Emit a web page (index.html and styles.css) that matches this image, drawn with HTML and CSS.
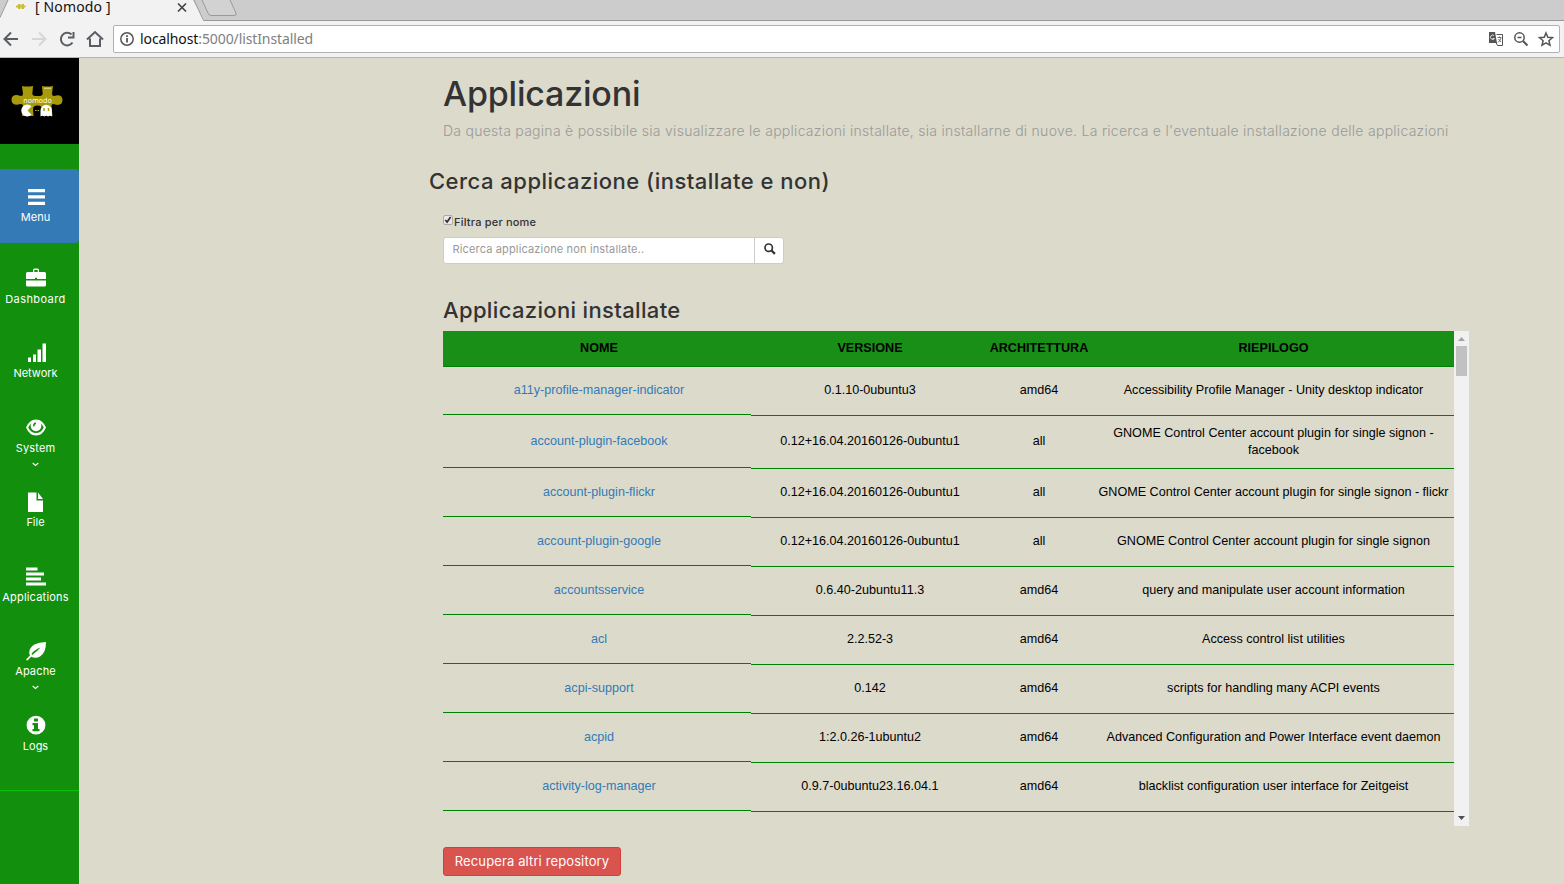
FILE: index.html
```html
<!DOCTYPE html>
<html lang="it">
<head>
<meta charset="utf-8">
<title>[ Nomodo ]</title>
<link rel="stylesheet" href="styles.css">
</head>
<body>
<header class="browser">
  <div class="tabs">
    <svg class="tab-shapes" width="260" height="21" viewBox="0 0 260 21">
      <path d="M0 21V17L8 0H193L204 20V21Z" fill="#f2f2f2"/>
      <path d="M0 17.500L8 0M194 0L203.500 20.500H260" fill="none" stroke="#999"/>
      <path d="M202 0L208 13Q209 15.500 211 15.500H234Q237 15.500 236 13L230 0" fill="#d2d2d2" stroke="#999"/>
      <path d="M16 5.500h2V4h2.500v1.500h1V4H24v1.500h1.500v2H24V9h-2.500V7.500h-1V9H18V7.500h-2z" fill="#c9bd3c"/>
      <path d="M178 3.500l8 8M186 3.500l-8 8" stroke="#444" stroke-width="1.700"/>
    </svg>
    <span class="tab-title">[ Nomodo ]</span>
  </div>
  <div class="toolbar">
    <svg class="nav-icons" width="113" height="36" viewBox="0 21 113 36" fill="none" stroke="#5a5d62" stroke-width="2">
      <path d="M18 39H5M11 32.500L4.500 39l6.500 6.500"/>
      <path d="M32 39h13M39 32.500l6.500 6.500-6.500 6.500" stroke="#d6d6d6"/>
      <path d="M72.500 42.500A6.300 6.300 0 1 1 71.500 34.500M73.500 32v5.500H68"/>
      <path d="M87 39.500L95 32l8 7.500M90 38.500v7.500h10v-7.500"/>
    </svg>
    <div class="address">
      <svg width="16" height="16" viewBox="0 0 16 16" fill="none" stroke="#555" stroke-width="1.500"><circle cx="8" cy="8" r="6.200"/><path d="M8 7v4.500M8 4.300v1.700" stroke-width="1.800"/></svg>
      <span class="url"><b>localhost</b>:5000/listInstalled</span>
      <svg class="address-icons" width="70" height="20" viewBox="1486 29 70 20" fill="none" stroke="#555" stroke-width="1.500">
        <path d="M1489 32h6l2 11h-8z" fill="#555" stroke="none"/><path d="M1496.500 34.500h6v11h-5l-1.500-3" stroke-width="1"/><path d="M1494 35.500a2.200 2.200 0 1 0 .5 3h-2" stroke="#ddd" stroke-width="1"/><path d="M1497.500 37.500h4M1499.500 36.500v1M1501 38q-1 3-3 4.500M1498.500 39l2.500 3" stroke-width=".8"/>
        <circle cx="1519.500" cy="37.500" r="4.700"/><path d="M1523 41l4.500 4.500" stroke-width="2"/><path d="M1517.500 37.500h4"/>
        <path d="M1546 33l1.800 4.300 4.700.4-3.600 3.100 1.100 4.500-4-2.400-4 2.400 1.100-4.500-3.600-3.100 4.700-.4z"/>
      </svg>
    </div>
  </div>
</header>
<div class="page">
  <nav class="sidebar">
    <div class="brand">
      <svg width="52" height="34" viewBox="0 0 52 34">
        <path d="M11 1q5.500 1 11 0l-.5 6q-1 4 3 4h4q4 0 3-4L31 1q5.500 1 11 0l-1 7.500q0 2.500 2 2.500l3.500-.8q5 0 5 4.800t-5 5L42 19q-1.500 0-1.500 2l1 10H30l1-7q0-3.500-4.500-3.500T22 24l.5 7H11l1-10q0-2-2-2l-4 .8q-5.500 0-5.500-5T6 10l4 1q2 0 2-2.500z" fill="#a89a08"/>
        <path d="M20.500 21.300a6 6 0 1 0 0 8.500L16.500 25.500z" fill="#fff"/>
        <path d="M29.500 31.500V25.500a5.700 5.700 0 0 1 11.400 0V31.500l-2-1-1.800 1-1.900-1-1.900 1-1.900-1z" fill="#fff"/>
        <path d="M33 23v3M37.500 23v3" stroke="#a89a08" stroke-width="1.500"/>
        <path d="M24 25.500h4" stroke="#b8a920" stroke-width="1.200" stroke-dasharray="1.500 1"/>
        <path d="M33 3.200h7" stroke="#ede7b5" stroke-width=".9"/>
        <text x="26.500" y="17.500" text-anchor="middle" class="brand-text">nomodo</text>
      </svg>
    </div>
    <a class="item active">
      <svg width="20" height="20" viewBox="0 0 20 20"><path d="M2 3h17v3.200H2zM2 9.300h17v3.200H2zM2 15.700h17v3.200H2z"/></svg><span class="label l-menu">Menu</span></a>
    <a class="item">
      <svg width="20" height="20" viewBox="0 0 20 20"><path d="M7 4V2Q7 .5 8.500 .5h3Q13 .5 13 2v2h5.500Q20 4 20 5.500v5.500h-9v-1.300H9v1.300H0v-5.500Q0 4 1.500 4zM8.300 4h3.400V2H8.300zM0 12.500h20v4.500Q20 18.500 18.500 18.500h-17Q0 18.500 0 17z" fill-rule="evenodd"/></svg><span class="label l-wide">Dashboard</span></a>
    <a class="item">
      <svg width="20" height="20" viewBox="0 0 20 20"><path d="M2 16h3v5H2zM7 13h3v8H7zM11.500 8h3.500v13h-3.500zM16.500 2H20v19h-3.500z" transform="translate(0 -.5)"/></svg><span class="label">Network</span></a>
    <a class="item">
      <svg width="20" height="20" viewBox="0 0 20 20"><path d="M0 10.500Q3.500 2.500 10 2.500t10 8Q16.500 18.500 10 18.500T0 10.500zm2.200 0Q5 16 10 16t7.800-5.500Q16.500 8 14.800 6.700a5.300 5.300 0 1 1-9.600 0Q3.500 8 2.200 10.500zM9.500 5.200q-2.600.8-2.500 4l1.200.2q.3-2.200 2-2.500z" fill-rule="evenodd"/></svg><span class="label l-sys">System</span>
      <svg class="caret" width="7" height="5" viewBox="0 0 7 5"><path d="M.7 1l2.800 2.500L6.300 1"/></svg></a>
    <a class="item">
      <svg class="down" width="20" height="20" viewBox="0 0 20 20"><path d="M2 .5h8.500v8H17V20H2zM12 .5L17 7h-5z"/></svg><span class="label">File</span></a>
    <a class="item">
      <svg width="20" height="20" viewBox="0 0 20 20"><path d="M0 1.500h11.500v3H0zM0 6.500h18v3H0zM0 11.500h15v3H0zM0 16.500h20v3H0z"/></svg><span class="label l-apps">Applications</span></a>
    <a class="item">
      <svg class="down" width="20" height="20" viewBox="0 0 20 20"><path d="M20 1Q6 2 4 8 2.500 12 4 14.500L0 18.500q1 1.500 2 .5l3.200-3.200Q10 18 14 15.500 20 12 20 1zM5.500 13Q8 9 14.500 6.500 11.500 10 6.200 14z" fill-rule="evenodd"/></svg><span class="label l-sys">Apache</span>
      <svg class="caret" width="7" height="5" viewBox="0 0 7 5"><path d="M.7 1l2.800 2.500L6.300 1"/></svg></a>
    <a class="item">
      <svg width="20" height="20" viewBox="0 0 20 20"><path d="M10 .8a9.400 9.400 0 1 0 0 18.800a9.400 9.400 0 1 0 0-18.800zM8 3.500h4v3H8zM6.500 8H12v6h1.500v2.200h-7V14H8v-3.800H6.500z" fill-rule="evenodd"/></svg><span class="label">Logs</span></a>
    <div class="rule"></div>
  </nav>
  <main class="content">
    <h1>Applicazioni</h1>
    <p class="lead">Da questa pagina è possibile sia visualizzare le applicazioni installate, sia installarne di nuove. La ricerca e l'eventuale installazione delle applicazioni</p>
    <h2 class="search-title">Cerca applicazione (installate e non)</h2>
    <div class="filter">
      <svg width="10" height="10" viewBox="0 0 10 10"><rect x=".5" y=".5" width="9" height="9" rx="1.500" fill="#e8e8e8" stroke="#aaa"/><path d="M2.300 5l1.800 2 3.500-5" fill="none" stroke="#333" stroke-width="1.800"/></svg>
      <span>Filtra per nome</span>
    </div>
    <div class="search">
      <div class="field">Ricerca applicazione non installate..</div>
      <div class="search-btn"><svg width="12" height="12" viewBox="0 0 12 12"><circle cx="4.700" cy="4.700" r="3.700" fill="none" stroke="#333" stroke-width="1.700"/><path d="M7.500 7.500l3.400 3.400" stroke="#333" stroke-width="2.200"/></svg></div>
    </div>
    <h2 class="list-title">Applicazioni installate</h2>
    <div class="list">
      <div class="table">
        <div class="row head"><div>NOME</div><div>VERSIONE</div><div>ARCHITETTURA</div><div>RIEPILOGO</div></div>
        <div class="row"><div class="name">a11y-profile-manager-indicator</div><div>0.1.10-0ubuntu3</div><div>amd64</div><div>Accessibility Profile Manager - Unity desktop indicator</div></div>
        <div class="row tall"><div class="name">account-plugin-facebook</div><div>0.12+16.04.20160126-0ubuntu1</div><div>all</div><div>GNOME Control Center account plugin for single signon -<br>facebook</div></div>
        <div class="row"><div class="name">account-plugin-flickr</div><div>0.12+16.04.20160126-0ubuntu1</div><div>all</div><div>GNOME Control Center account plugin for single signon - flickr</div></div>
        <div class="row"><div class="name">account-plugin-google</div><div>0.12+16.04.20160126-0ubuntu1</div><div>all</div><div>GNOME Control Center account plugin for single signon</div></div>
        <div class="row"><div class="name">accountsservice</div><div>0.6.40-2ubuntu11.3</div><div>amd64</div><div>query and manipulate user account information</div></div>
        <div class="row"><div class="name">acl</div><div>2.2.52-3</div><div>amd64</div><div>Access control list utilities</div></div>
        <div class="row"><div class="name">acpi-support</div><div>0.142</div><div>amd64</div><div>scripts for handling many ACPI events</div></div>
        <div class="row"><div class="name">acpid</div><div>1:2.0.26-1ubuntu2</div><div>amd64</div><div>Advanced Configuration and Power Interface event daemon</div></div>
        <div class="row"><div class="name">activity-log-manager</div><div>0.9.7-0ubuntu23.16.04.1</div><div>amd64</div><div>blacklist configuration user interface for Zeitgeist</div></div>
      </div>
      <div class="scrollbar">
        <svg width="15" height="15" viewBox="0 0 15 15"><path d="M4 10h7L7.500 6z" fill="#a3a3a3"/></svg>
        <div class="thumb"></div>
        <svg width="15" height="15" viewBox="0 0 15 15"><path d="M4 5h7L7.500 9z" fill="#505050"/></svg>
      </div>
    </div>
    <div class="danger-btn">Recupera altri repository</div>
  </main>
</div>
</body>
</html>
```
FILE: styles.css
```css
* { box-sizing: border-box; }
body { margin: 0; height: 884px; overflow: hidden; background: #dcdacb; font-family: Inter, "Open Sans", sans-serif; color: #333; }
svg { display: block; flex: none; }
.browser { height: 58px; background: #f2f2f2; border-bottom: 1px solid #b3b6b3; }
.tabs { position: relative; height: 21px; background: #ccc; border-bottom: 1px solid #999; }
.tab-title { position: absolute; left: 35px; top: -3px; font: 14px/20px "Noto Sans", sans-serif; color: #111; letter-spacing: .15px; white-space: nowrap; }
.toolbar { display: flex; height: 36px; padding-right: 4px; align-items: center; }
.address { display: flex; flex: 1; height: 28px; align-items: center; padding: 0 5px; background: #fff; border: 1px solid #b0b0b0; border-radius: 2px; }
.url { flex: 1; margin-left: 5px; font: 14px/20px "Noto Sans", sans-serif; color: #808080; letter-spacing: -.1px; white-space: nowrap; }
.url b { font-weight: 400; color: #111; }
.address-icons { margin-right: -2px; }
.page { display: flex; height: 826px; }
.sidebar { width: 79px; background: #138f0e; }
.brand { height: 86px; margin-bottom: 25px; padding: 27px 0 0 11px; background: #000; }
.brand-text { font: 7px "DejaVu Sans", sans-serif; fill: #fff; }
.item { display: flex; flex-direction: column; align-items: center; height: 74.600px; padding: 18px 8px 0 0; color: #fff; font-size: 11px; line-height: 16px; white-space: nowrap; }
.item.active { height: 74px; margin-bottom: 6.500px; background: #337ab7; border-radius: 0 4px 4px 0; padding-top: 17px; }
.item svg { fill: #fff; }
.item .down { margin: 1px 0 -1px; }
.label { margin-top: 3px; }
.l-wide { letter-spacing: .42px; }
.l-sys { letter-spacing: .15px; }
.l-apps { letter-spacing: .2px; }
.item .caret { margin-top: 6px; fill: none; stroke: #fff; stroke-width: 1.100; }
.rule { margin-top: 18px; height: 1px; background: #0cc10c; }
.content { width: 1026px; margin-left: 364px; }
h1, h2, p { margin: 0; white-space: nowrap; }
h1 { padding-top: 13px; font-size: 34px; line-height: 46px; font-weight: 500; letter-spacing: -.2px; }
.lead { margin-top: 3px; font-size: 14px; line-height: 22px; font-weight: 300; letter-spacing: .272px; color: #999; }
h2 { font-size: 22px; line-height: 30px; font-weight: 500; letter-spacing: .35px; }
.search-title { margin: 24px 0 0 -14px; letter-spacing: .49px; }
.filter { display: flex; margin-top: 19px; height: 16px; font-size: 11px; line-height: 16px; font-weight: 500; letter-spacing: .2px; }
.filter svg { margin: 0 1px 0 0; }
.filter span { margin-top: -1px; }
.search { display: flex; width: 341px; height: 27px; margin-top: 6px; background: #fff; border: 1px solid #ccc; border-radius: 3px; }
.field { flex: 1; padding-left: 8.500px; font-size: 11px; line-height: 23px; letter-spacing: .15px; color: #999; }
.search-btn { width: 29px; padding: 5px 0 0 8.500px; border-left: 1px solid #ccc; }
.list-title { margin-top: 31px; }
.list { display: flex; height: 495px; margin-top: 6px; font: 12.600px/17px "Liberation Sans", Arial, sans-serif; color: #000; }
.table { width: 1011px; }
.row { display: grid; grid-template-columns: 308px 234px 108px 361px; height: 49px; text-align: center; }
.row > div { padding-top: 15px; border-bottom: 1px solid #008000; }
.row > div:nth-child(-n+2) { padding-left: 4px; }
.row .name { height: 48px; color: #337ab7; }
.row.tall { height: 53px; }
.row.tall > div { padding-top: 17px; }
.row.tall > div:last-child { padding-top: 9px; }
.row.tall .name { height: 52px; }
.row.head { height: 36px; background: #198f17; font-weight: 700; }
.row.head > div { padding-top: 9px; }
.scrollbar { display: flex; flex-direction: column; width: 15px; background: #f1f1f1; }
.thumb { width: 11px; height: 30px; margin: 0 2px auto; background: #c1c1c1; }
.danger-btn { width: 178px; height: 29px; margin-top: 21px; border: 1px solid #d43f3a; border-radius: 3px; background: #d9534f; color: #fff; font-size: 13px; line-height: 27px; letter-spacing: .12px; text-align: center; white-space: nowrap; }
```
